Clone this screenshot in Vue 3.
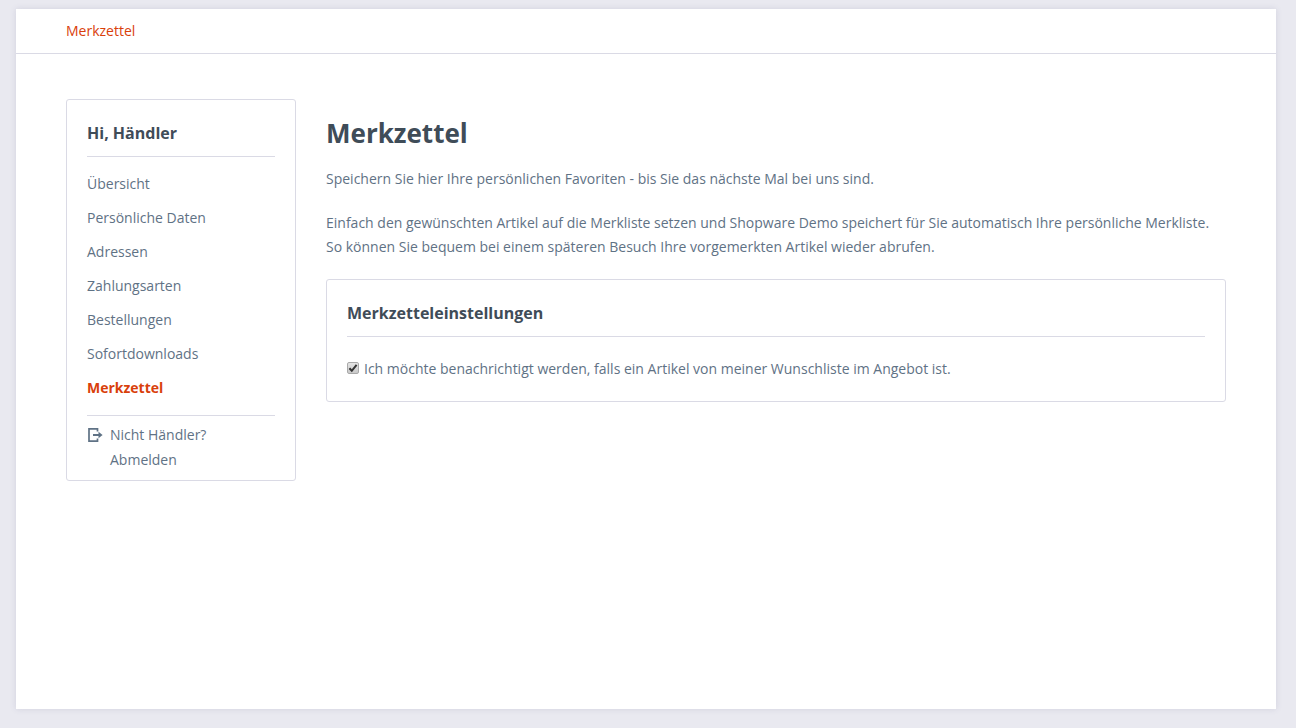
<script setup>
const links = ['Übersicht', 'Persönliche Daten', 'Adressen', 'Zahlungsarten', 'Bestellungen', 'Sofortdownloads']
</script>

<template>
  <div class="page">
    <div class="shell">
      <nav class="crumbs"><a class="crumb">Merkzettel</a></nav>
      <div class="content">
        <aside class="side">
          <h2 class="hi">Hi, Händler</h2>
          <ul class="menu">
            <li v-for="l in links" :key="l">{{ l }}</li>
            <li class="active">Merkzettel</li>
          </ul>
          <div class="logout">
            <svg class="icon" width="16" height="16" viewBox="0 0 16 16" fill="none" stroke="#5f7285" stroke-width="1.7">
              <path d="M10.5 4.6V1.9H2v12.2h8.5v-2.7" />
              <path d="M6 8h6.5" stroke-width="2" />
              <path d="M11.5 4.8 15.6 8l-4.1 3.2z" fill="#5f7285" stroke="none" />
            </svg>
            <div class="logout-text">
              <span>Nicht Händler?</span>
              <span>Abmelden</span>
            </div>
          </div>
        </aside>
        <main class="main">
          <h1 class="title">Merkzettel</h1>
          <p class="lead">Speichern Sie hier Ihre persönlichen Favoriten - bis Sie das nächste Mal bei uns sind.</p>
          <p class="lead second">Einfach den gewünschten Artikel auf die Merkliste setzen und Shopware Demo speichert für Sie automatisch Ihre persönliche Merkliste.<br>So können Sie bequem bei einem späteren Besuch Ihre vorgemerkten Artikel wieder abrufen.</p>
          <section class="panel">
            <h3 class="panel-title">Merkzetteleinstellungen</h3>
            <label class="check">
              <span class="box">
                <input type="checkbox" checked>
                <svg class="tick" width="12" height="12" viewBox="0 0 12 12" fill="none" stroke="#333" stroke-width="2">
                  <path d="M2.4 6.2 4.8 8.8 9.6 2.8" />
                </svg>
              </span>
              <span>Ich möchte benachrichtigt werden, falls ein Artikel von meiner Wunschliste im Angebot ist.</span>
            </label>
          </section>
        </main>
      </div>
    </div>
  </div>
</template>

<style>
html, body { margin: 0; background: #e9e9f0; }
</style>

<style scoped>
.page {
  height: 728px;
  box-sizing: border-box;
  padding: 9px 20px 19px 16px;
  background: #e9e9f0;
  font-family: "Open Sans", "Liberation Sans", sans-serif;
  font-size: 14px;
  color: #5f7285;
  overflow: hidden;
}
.shell {
  height: 700px;
  background: #fff;
  box-shadow: 0 0 6px 0 rgba(90, 90, 130, 0.16);
}
.crumbs {
  height: 45px;
  box-sizing: border-box;
  border-bottom: 1px solid #dadae5;
  padding: 0 50px;
  line-height: 43px;
}
.crumb { color: #d9400b; }
.content {
  display: flex;
  gap: 30px;
  padding: 45px 50px 0;
  align-items: flex-start;
}
.side {
  width: 230px;
  height: 382px;
  box-sizing: border-box;
  border: 1px solid #dadae5;
  border-radius: 3px;
  padding: 0 20px;
  flex: none;
}
.hi {
  margin: 0;
  height: 57px;
  box-sizing: border-box;
  border-bottom: 1px solid #dadae5;
  font-size: 16px;
  font-weight: 700;
  line-height: 67px;
  color: #3f4c58;
}
.menu {
  list-style: none;
  margin: 0;
  padding: 10px 0 10px;
  border-bottom: 1px solid #dadae5;
}
.menu li {
  height: 34px;
  line-height: 34px;
}
.menu .active {
  color: #d9400b;
  font-weight: 700;
}
.logout {
  display: flex;
  align-items: flex-start;
  gap: 7px;
  padding-top: 6px;
}
.icon { margin-top: 5px; flex: none; }
.logout-text {
  display: flex;
  flex-direction: column;
  line-height: 25px;
}
.main { flex: 1; min-width: 0; }
.title {
  margin: 0;
  padding-top: 14px;
  font-size: 26px;
  font-weight: 700;
  line-height: 40px;
  color: #3f4c58;
}
.lead {
  margin: 0;
  padding-top: 14px;
  line-height: 24px;
}
.second { padding-top: 20px; }
.panel {
  margin-top: 20px;
  height: 123px;
  box-sizing: border-box;
  border: 1px solid #dadae5;
  border-radius: 3px;
  padding: 0 20px;
}
.panel-title {
  margin: 0;
  height: 57px;
  box-sizing: border-box;
  border-bottom: 1px solid #dadae5;
  font-size: 16px;
  font-weight: 700;
  line-height: 67px;
  color: #3f4c58;
}
.check {
  display: flex;
  align-items: center;
  gap: 5px;
  margin-top: 20px;
  line-height: 24px;
}
.box {
  position: relative;
  width: 12px;
  height: 12px;
  flex: none;
  top: -1px;
}
.box input {
  appearance: none;
  display: block;
  box-sizing: border-box;
  margin: 0;
  width: 12px;
  height: 12px;
  border: 1px solid #a9a9a9;
  border-radius: 2px;
  background: linear-gradient(#e4e4e4, #c9c9c9);
}
.tick {
  position: absolute;
  left: 0;
  top: 0;
}
</style>
